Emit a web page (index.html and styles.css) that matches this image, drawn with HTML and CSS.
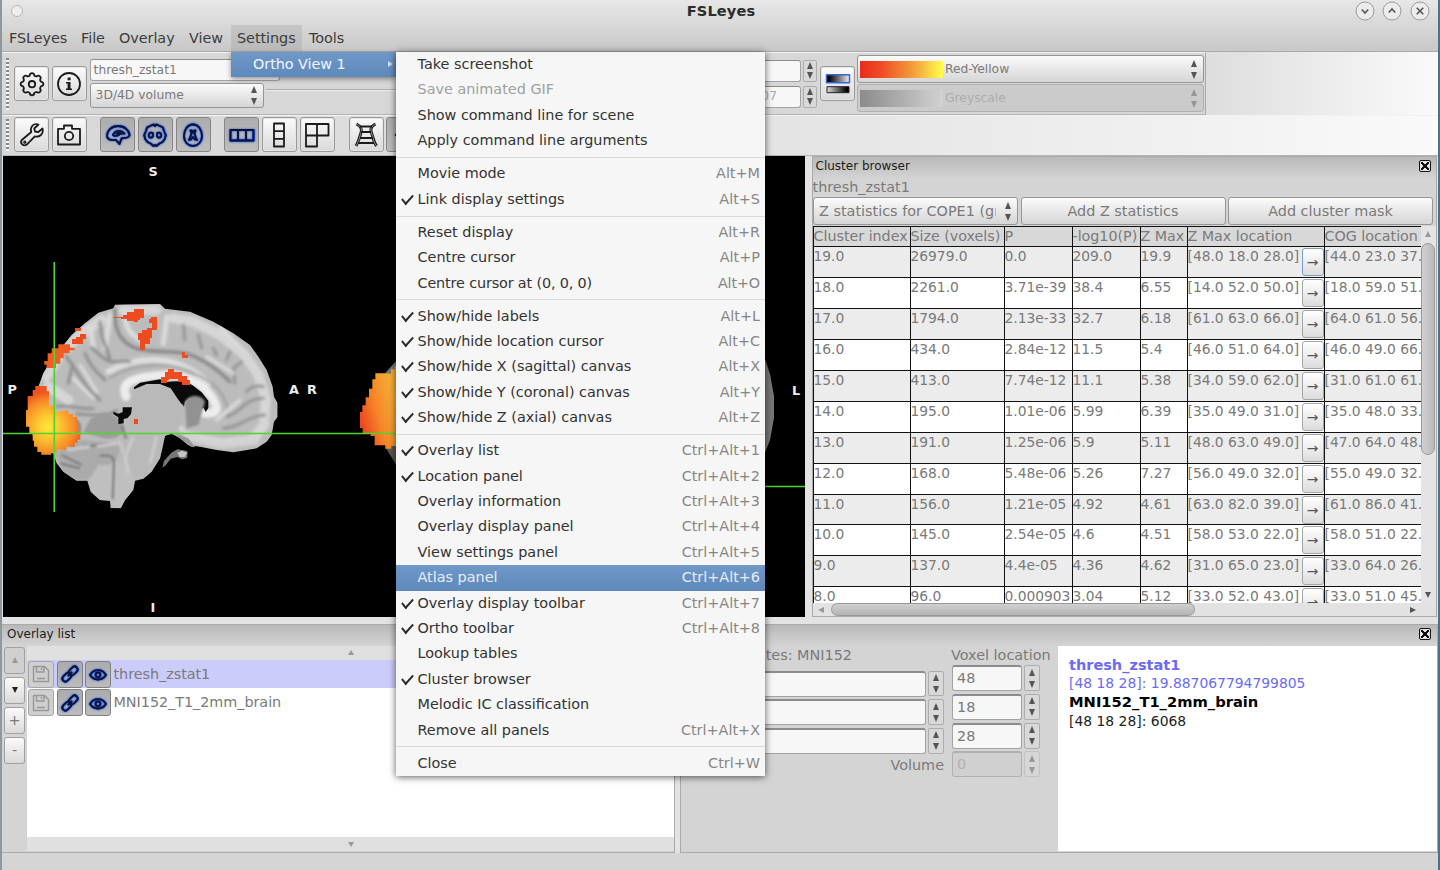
FILE: index.html
```html
<!DOCTYPE html>
<html lang="en">
<head>
<meta charset="utf-8">
<title>FSLeyes</title>
<link rel="stylesheet" href="styles.css">
</head>
<body>
<div class="window">
  <header class="chrome">
    <div class="titlebar">
      <span class="dot"></span>
      <h1 class="title">FSLeyes</h1>
      <div class="winbtns">
        <svg width="20" height="20" viewBox="0 0 20 20"><circle cx="10" cy="10" r="9"/><path d="M6.800 8.500 10 12l3.200-3.500"/></svg>
        <svg width="20" height="20" viewBox="0 0 20 20"><circle cx="10" cy="10" r="9"/><path d="M6.800 11.500 10 8l3.200 3.500"/></svg>
        <svg width="20" height="20" viewBox="0 0 20 20"><circle cx="10" cy="10" r="9"/><path d="M6.700 6.700l6.600 6.600M13.300 6.700l-6.600 6.600"/></svg>
      </div>
    </div>
    <nav class="menubar">
      <span class="mb m1">FSLeyes</span><span class="mb m2">File</span><span class="mb m3">Overlay</span><span class="mb m4">View</span><span class="mb m5 open">Settings</span><span class="mb m6">Tools</span>
    </nav>
  </header>

  <div class="toolrow">
  <div class="toolbar tb1">
    <span class="grip"></span>
    <button class="tool"><svg width="26" height="26" viewBox="0 0 26 26"><path d="M13 2.200q2 0 2.500 2.600l1.800.7q2.300-1.500 3.700-.2t0 3.600l.8 1.800q2.600.5 2.600 2.400t-2.600 2.400l-.8 1.800q1.400 2.300 0 3.600t-3.700.1l-1.800.8q-.5 2.500-2.500 2.500t-2.500-2.500l-1.800-.8q-2.300 1.300-3.700-.1t0-3.600l-.8-1.800q-2.600-.5-2.600-2.400t2.600-2.400l.8-1.800q-1.400-2.300 0-3.600t3.700.2l1.800-.7q.5-2.600 2.500-2.600z"/><circle cx="13" cy="13.200" r="3.200"/></svg></button>
    <button class="tool"><svg width="26" height="26" viewBox="0 0 26 26"><circle cx="13" cy="13" r="11"/><path class="fill" d="M11.600 6.500h3v2.800h-3zM10 11h4.500v6.500H16V19h-6v-1.500h1.600v-5H10z"/></svg></button>
    <div class="names">
      <div class="field">thresh_zstat1</div>
      <div class="combo">3D/4D volume<span class="arrows"></span></div>
    </div>
    <div class="slider"></div>
    <div class="spins">
      <div class="spinrow"><div class="field"></div><span class="spin"></span></div>
      <div class="spinrow"><div class="field">2.007</div><span class="spin"></span></div>
    </div>
    <button class="tool cm"><svg width="26" height="26" viewBox="0 0 26 26"><defs><linearGradient id="ga"><stop offset=".1" stop-color="#000"/><stop offset="1" stop-color="#eee"/></linearGradient><linearGradient id="gb"><stop offset="0" stop-color="#ddd"/><stop offset=".9" stop-color="#000"/></linearGradient></defs><rect x="1.500" y="3.700" width="23" height="8" fill="url(#ga)" stroke="#3565d8" stroke-width="1.500"/><rect x="2" y="15.700" width="22" height="6" fill="url(#gb)" stroke="#222" stroke-width="1"/></svg></button>
    <div class="maps">
      <div class="combo"><i class="ramp hot"></i>Red-Yellow<span class="arrows"></span></div>
      <div class="combo off"><i class="ramp grey"></i>Greyscale<span class="arrows"></span></div>
    </div>
  </div>
  </div>

  <div class="toolbar tb2">
    <span class="grip"></span>
    <button class="tool"><svg width="26" height="26" viewBox="0 0 26 26"><path d="M23.500 6.500l-4.500 3.700-3-.7-.8-3 4.300-4c-3-1.200-6 .2-7.200 3-.7 1.600-.5 3.200 0 4.500L2.800 18c-2.300 3 1.700 7 5 4.600l8-8.200c4.600 1.200 9.100-2.300 7.700-7.900z"/><circle cx="5.800" cy="20.200" r=".7"/></svg></button>
    <button class="tool"><svg width="26" height="26" viewBox="0 0 26 26"><path d="M2 6.800h6V3.500h8v3.300h8v15.700H2z"/><circle cx="13" cy="14" r="4.200"/></svg></button>
    <button class="tool on g1"><svg class="glow" width="26" height="26" viewBox="0 0 26 26"><path d="M2 14.500C2 8 7 4 13 4c7 0 11.500 5 11.500 9.500-1 2.500-3.500 2.500-5.500 2.500-1 0-2 0-2.500.5l-2 5.500-3.500-4C7 18.500 3 18 2 14.500z"/><path d="M8 13c2-5 8-5.500 11.500-1.500-3-.5-4.500.2-6 1.500-1.500 1-4.500 1.500-5.500 0zM11 12c1.500-1.500 3-1.500 5-1.500"/></svg></button>
    <button class="tool on"><svg class="glow" width="26" height="26" viewBox="0 0 26 26"><path d="M13 4l1.500-1.500L18 4l3 1.500.8 3 2 4.500-1 4-2.300 3-3 1.500-3 2.500-1.500-1-1.500 1-3-2.500-3-1.500-2.300-3-1-4 2-4.500.8-3L8 4l3.500-1.500z"/><path d="M10.800 11c-3-1-4.500.5-4 3s3 2 4.200.2zM15.200 11c3-1 4.500.5 4 3s-3 2-4.200.2z"/></svg></button>
    <button class="tool on"><svg class="glow" width="26" height="26" viewBox="0 0 26 26"><path d="M13 2.500c5.500 0 9 5.500 9 11.500S18 24 13 24 4 20 4 14 7.500 2.500 13 2.500z"/><path d="M10.500 8.500l1 3-1 3-1.500 3.500 2-.5 2-2.500 2 2.500 2 .5-1.500-3.500-1-3 1-3-1.500.2-1 1.800-1-1.800z"/></svg></button>
    <button class="tool on g2"><svg class="glow" width="26" height="26" viewBox="0 0 26 26"><path d="M1.500 8h23v10.500h-23zM9 8v10.500M17 8v10.500"/></svg></button>
    <button class="tool"><svg width="26" height="26" viewBox="0 0 26 26"><path d="M8 1.500h10v23H8zM8 9.200h10M8 16.800h10"/></svg></button>
    <button class="tool"><svg width="26" height="26" viewBox="0 0 26 26"><path d="M2 2h22.500v11.500H13V24.500H2zM13 2v11.500H2"/></svg></button>
    <button class="tool g3"><svg width="26" height="26" viewBox="0 0 26 26"><path d="M3.500 2c6 3 5.500 6.500 4 10.500S5.500 20 3 24M22.500 2c-6 3-5 6.500-3.500 10.500s1.500 7.500 4.500 11.500" stroke-width="3"/><path d="M3.500 2c6 3 5.500 6.500 4 10.500S5.500 20 3 24M22.500 2c-6 3-5 6.500-3.500 10.500s1.500 7.500 4.500 11.500" stroke="#aaa" stroke-width=".8"/><path d="M7 4.500h12M8 10h10M7 16h13M5 21h16"/></svg></button>
    <button class="tool on"><svg class="glow" width="26" height="26" viewBox="0 0 26 26"><path d="M4 13h20M13 2v22"/></svg></button>
  </div>

  <main class="work">
    <div class="canvas">
      <svg width="802" height="461" viewBox="3 156 802 461">
        <defs>
          <filter id="s1" x="-10%" y="-10%" width="120%" height="120%"><feGaussianBlur stdDeviation="4"/></filter>
          <filter id="s2" x="-10%" y="-10%" width="120%" height="120%"><feGaussianBlur stdDeviation="3.500"/></filter>
          <radialGradient id="occ" gradientUnits="userSpaceOnUse" cx="145" cy="410" r="105"><stop offset="0" stop-color="#ffe93c"/><stop offset=".35" stop-color="#fcc52f"/><stop offset=".75" stop-color="#f78b27"/><stop offset="1" stop-color="#ee5420"/></radialGradient>
          <linearGradient id="occ2" gradientUnits="userSpaceOnUse" x1="1080" y1="380" x2="1190" y2="350"><stop offset="0" stop-color="#ec4920"/><stop offset=".45" stop-color="#f58428"/><stop offset="1" stop-color="#f5ac35"/></linearGradient>
          <path id="bo" d="M115 290L130 250 150 215 215 135 255 100 295 68 340 55 345 44 480 42 495 56 570 65 640 95 700 130 750 165 775 200 800 240 818 290 822 320 833 340 833 380 822 395 815 435 800 455 770 475 700 487 650 480 600 470 565 466 540 445 515 431 495 437 487 475 480 505 455 545 430 566 405 572 400 600 375 630 362 655 332 655 330 632 300 630 272 605 262 572 230 572 190 545 170 520 160 490 130 485 100 440 85 400 95 330z"/>
          <clipPath id="bc"><use href="#bo"/></clipPath>
        </defs>
        <g transform="translate(0 290) scale(.33333)">
          <g clip-path="url(#bc)">
            <path fill="#bcbcbc" d="M0 0h900v700H0z"/>
            <g fill="none" stroke-linecap="round" stroke-linejoin="round" filter="url(#s1)">
              <path d="M140 260l40-65 65-65 60-40M520 85l60 10 80 40 70 55 45 65 22 70-5 80-35 45-90 10-100-20M370 60h100M145 290l60 40" stroke="#d6d6d6" stroke-width="30"/>
              <path d="M345 60c-5 60 20 105 75 118 60 12 120 0 165 22 45 20 75 45 105 75" stroke="#868686" stroke-width="10"/>
              <path d="M375 70c0 45 20 75 65 85M500 80l-10 80M330 75l-15 100M270 110l10 60" stroke="#dadada" stroke-width="16"/>
              <path d="M325 245c90-50 210-55 300 35" stroke="#dedede" stroke-width="18"/>
              <path d="M330 262c80-48 190-48 260-8 55 25 85 55 95 115" stroke="#9a9a9a" stroke-width="6"/>
              <path d="M378 320c-20-48 30-58 110-65 80-5 150 45 162 100 0 15-25 18-45 12" stroke="#ededed" stroke-width="26"/>
              <path d="M195 195c40 50 55 95 105 135M300 95c0 50 25 80 30 118-25-5-40-30-55-40M330 215c20 5 40-5 60 0M255 190c15 40 40 60 60 80M215 235l-10 45" stroke="#8e8e8e" stroke-width="9"/>
              <path d="M550 105c5 20 0 30 5 45M595 135l10 40M640 175l10 20M690 185l-10 25M725 215l-25 20 5 45M790 290c-20-5-40 0-50 15M790 325c-60 0-60 40-110 55M795 375c-50 0-75 40-125 40" stroke="#959595" stroke-width="9"/>
              <path d="M220 265l60 60M240 225l50 80M660 110l60 60M620 200l80 50M720 330l-70 60" stroke="#dedede" stroke-width="9"/>
              <path d="M170 350c40-10 60 10 110 5M230 372c40 0 80 12 120-10" stroke="#868686" stroke-width="7"/>
              <path d="M540 410c20 30 60 50 120 55l110-10" stroke="#d2d2d2" stroke-width="16"/>
            </g>
            <g filter="url(#s2)">
              <path d="M402 295c45-22 90-20 125 5 25 30 30 60 25 95l-35 35-25 15-10 60-50 60-55-5-20-60 10-80 20-40z" fill="#b9b9b9"/>
              <path d="M270 390c30-30 80-25 100 15 5 30-25 45-60 40l-60-20z" fill="#9c9c9c"/>
              <path d="M165 490l80-40 120 10-15 50-90 60-60 0z" fill="#ababab"/>
              <path d="M265 575l30-50 42 0v110h-50zM345 515l40 5 20 50-30 90h-30z" fill="#bfbfbf"/>
              <path d="M300 498c35-5 42 5 42 20l-4 110M185 495l60 30M180 520l60 15M225 390c20 10 15 30 10 45M365 405c10 20 5 30 15 40M250 470l100-10" fill="none" stroke="#7e7e7e" stroke-width="7"/>
              <path d="M290 470l70-12 10 30M200 480l70-10" fill="none" stroke="#c8c8c8" stroke-width="10"/>
              <path d="M400 440l-25 60 10 50M470 440l-20 80" fill="none" stroke="#cacaca" stroke-width="10"/>
            </g>
            <path d="M402 292l18-14 60-10 15 8 60-4 25 15 25 20 20 25 0 22-8 12-12-25-20-20-20-8-15 12-3 20-15-20-20-30-32-13-40 0-38 16zM340 365l15 6 13-5v-14l28 0-3 20-10 12-12 3 0 13-16 2v-20l-15-10z" fill="#0a0a0a"/>
            <path d="M515 282l30 0 30 25 35 25 8 15-12 10-14-22-22-12-15 12-3 15z" fill="#0a0a0a"/>
            <path d="M555 335c15-25 50-20 60 0l-20 70-35 10z" fill="#929292" filter="url(#s2)"/>
          </g>
          <path d="M487 533l5-20 22-25 18-10 30 5v20l-15 5-15-7-20 5-15 20z" fill="#777"/><path d="M532 488l15-6 15 6-8 13h-15z" fill="#c4c4c4"/><path d="M525 430l40 15 20 27-12-2-33-25z" fill="#999"/>
          <g fill="#ee4b20" shape-rendering="crispEdges">
            <path d="M338 80h30v-5h12v-10h22v-7h29v25h-10v7h-7v7h-12v-5h-20v-5h-20v-3h-24zM454 81h16v40h-14v22h-7v20h-14v16h-14v-28h-7v-22h12v-9h16v-5h14v-16h-8v-12h6zM225 114h18v9h-18zM240 131h18v16h-10v14h-32v-14h12v-7h12zM545 187h9v8h10v8h-19zM403 386h12v16h-12zM482 262h14v-15h7v-10h19v9h25v12h14v12h8v16h-22v-9h-14v-9h-27v3h-6v9h-18z"/>
          </g>
          <path d="M133 213h10v-23h12v-15h20v-12h35v10h14v8h-15v9h-18v15h-10v16h-13v13h-28v-10h-7z" fill="#f05c23"/>
          <path d="M78 360h5v-42h15v-18h8v-12h34v16h7v44h15v18h18v-4h25v10h14v9h12v22h4v28h6v18h-8v9h-9v12h-25v9h-27v8h-18v7h-30v-8h-12v-16h-10v-18h-4v-20h-10v-22h-10z" fill="url(#occ)"/>
          <path d="M1200 200l-45 50h45z" fill="#777"/><path d="M1155 470l40 65v-90z" fill="#555"/>
          <path d="M1195 228h-10v10h-12v12h-47v18h-9v28h-10v26h-10v24h-10v20h-7v48h8v16h24v8h12v28h32v10h18v-8h20z" fill="url(#occ2)"/>
        </g>
        <path d="M764 356l6 18 4 22v22l-4 22-6 15z" fill="#777"/>
        <path d="M54.300 262v250M3 433.500h400M700 486.500h105" fill="none" stroke="#4fd52f" stroke-width="1.700"/>
        <g class="lbl"><text x="148.500" y="176">S</text><text x="7.500" y="394">P</text><text x="289" y="394">A</text><text x="307" y="394">R</text><text x="792" y="395">L</text><text x="150.500" y="612">I</text></g>
      </svg>
    </div>

    <section class="cluster">
      <div class="caption">Cluster browser<span class="close"></span></div>
      <div class="cname">thresh_zstat1</div>
      <div class="cbtns">
        <div class="combo big"><span class="clip">Z statistics for COPE1 (group mean)</span><span class="arrows"></span></div>
        <button class="btn">Add Z statistics</button><button class="btn">Add cluster mask</button>
      </div>
      <div class="gridwrap">
        <div class="grid">
          <div class="row head"><b>Cluster index</b><b>Size (voxels)</b><b>P</b><b>-log10(P)</b><b>Z Max</b><b>Z Max location</b><b>COG location</b></div>
          <div class="row"><b>19.0</b><b>26979.0</b><b>0.0</b><b>209.0</b><b>19.9</b><b>[48.0 18.0 28.0]<i class="go focus">→</i></b><b>[44.0 23.0 37.0]</b></div>
          <div class="row"><b>18.0</b><b>2261.0</b><b>3.71e-39</b><b>38.4</b><b>6.55</b><b>[14.0 52.0 50.0]<i class="go">→</i></b><b>[18.0 59.0 51.0]</b></div>
          <div class="row"><b>17.0</b><b>1794.0</b><b>2.13e-33</b><b>32.7</b><b>6.18</b><b>[61.0 63.0 66.0]<i class="go">→</i></b><b>[64.0 61.0 56.0]</b></div>
          <div class="row"><b>16.0</b><b>434.0</b><b>2.84e-12</b><b>11.5</b><b>5.4</b><b>[46.0 51.0 64.0]<i class="go">→</i></b><b>[46.0 49.0 66.0]</b></div>
          <div class="row"><b>15.0</b><b>413.0</b><b>7.74e-12</b><b>11.1</b><b>5.38</b><b>[34.0 59.0 62.0]<i class="go">→</i></b><b>[31.0 61.0 61.0]</b></div>
          <div class="row"><b>14.0</b><b>195.0</b><b>1.01e-06</b><b>5.99</b><b>6.39</b><b>[35.0 49.0 31.0]<i class="go">→</i></b><b>[35.0 48.0 33.0]</b></div>
          <div class="row"><b>13.0</b><b>191.0</b><b>1.25e-06</b><b>5.9</b><b>5.11</b><b>[48.0 63.0 49.0]<i class="go">→</i></b><b>[47.0 64.0 48.0]</b></div>
          <div class="row"><b>12.0</b><b>168.0</b><b>5.48e-06</b><b>5.26</b><b>7.27</b><b>[56.0 49.0 32.0]<i class="go">→</i></b><b>[55.0 49.0 32.0]</b></div>
          <div class="row"><b>11.0</b><b>156.0</b><b>1.21e-05</b><b>4.92</b><b>4.61</b><b>[63.0 82.0 39.0]<i class="go">→</i></b><b>[61.0 86.0 41.0]</b></div>
          <div class="row"><b>10.0</b><b>145.0</b><b>2.54e-05</b><b>4.6</b><b>4.51</b><b>[58.0 53.0 22.0]<i class="go">→</i></b><b>[58.0 51.0 22.0]</b></div>
          <div class="row"><b>9.0</b><b>137.0</b><b>4.4e-05</b><b>4.36</b><b>4.62</b><b>[31.0 65.0 23.0]<i class="go">→</i></b><b>[33.0 64.0 26.0]</b></div>
          <div class="row"><b>8.0</b><b>96.0</b><b>0.000903</b><b>3.04</b><b>5.12</b><b>[33.0 52.0 43.0]<i class="go">→</i></b><b>[33.0 51.0 45.0]</b></div>
        </div>
        <div class="vbar"><i class="tri up dim"></i><span class="vthumb"></span><i class="tri down"></i></div>
      </div>
      <div class="hbar"><i class="tri left dim"></i><span class="hthumb"></span><i class="tri right"></i></div>
    </section>
  </main>

  <div class="bottom">
    <section class="overlays">
      <div class="caption">Overlay list</div>
      <div class="obody">
        <div class="side"><button class="sb off"><i class="tri up"></i></button><button class="sb"><i class="tri down dark"></i></button><button class="sb">+</button><button class="sb">-</button></div>
        <div class="list">
          <div class="strip"><i class="tri up dim"></i></div>
          <div class="items">
            <div class="item sel">
              <span class="ib off"><svg width="18" height="18" viewBox="0 0 18 18"><path d="M1.500 1.500h11l4 4v11h-15zM4.500 1.500V7h7.500V1.500M9.500 3v2M5 13.500h8"/></svg></span>
              <span class="ib"><svg class="glow" width="18" height="18" viewBox="0 0 18 18"><g transform="rotate(-45 9 9)"><rect x="-.5" y="6" width="10" height="6" rx="3"/><rect x="8.500" y="6" width="10" height="6" rx="3"/><path d="M6 9h6"/></g></svg></span>
              <span class="ib"><svg class="glow" width="18" height="18" viewBox="0 0 18 18"><path d="M1 10c4-6.500 12-6.500 16 0-4 6-12 6-16 0z"/><circle cx="9" cy="9.700" r="2.400"/></svg></span>thresh_zstat1</div>
            <div class="item">
              <span class="ib off"><svg width="18" height="18" viewBox="0 0 18 18"><path d="M1.500 1.500h11l4 4v11h-15zM4.500 1.500V7h7.500V1.500M9.500 3v2M5 13.500h8"/></svg></span>
              <span class="ib"><svg class="glow" width="18" height="18" viewBox="0 0 18 18"><g transform="rotate(-45 9 9)"><rect x="-.5" y="6" width="10" height="6" rx="3"/><rect x="8.500" y="6" width="10" height="6" rx="3"/><path d="M6 9h6"/></g></svg></span>
              <span class="ib"><svg class="glow" width="18" height="18" viewBox="0 0 18 18"><path d="M1 10c4-6.500 12-6.500 16 0-4 6-12 6-16 0z"/><circle cx="9" cy="9.700" r="2.400"/></svg></span>MNI152_T1_2mm_brain</div>
          </div>
          <div class="strip"><i class="tri down dim"></i></div>
        </div>
      </div>
    </section>
    <section class="location">
      <div class="caption"><span class="close"></span></div>
      <div class="lbody">
        <div class="world">
          <div class="wtitle">Coordinates: MNI152</div>
          <div class="spinrow"><div class="field"></div><span class="spin"></span></div>
          <div class="spinrow"><div class="field"></div><span class="spin"></span></div>
          <div class="spinrow"><div class="field"></div><span class="spin"></span></div>
          <div class="vol">Volume</div>
        </div>
        <div class="voxel">
          <div class="vtitle">Voxel location</div>
          <div class="spinrow"><div class="field">48</div><span class="spin"></span></div>
          <div class="spinrow"><div class="field">18</div><span class="spin"></span></div>
          <div class="spinrow"><div class="field">28</div><span class="spin"></span></div>
          <div class="spinrow off"><div class="field">0</div><span class="spin"></span></div>
        </div>
        <div class="info"><p class="blue bold b1">thresh_zstat1</p><p class="blue">[48 18 28]: 19.887067794799805</p><p class="bold">MNI152_T1_2mm_brain</p><p>[48 18 28]: 6068</p></div>
      </div>
    </section>
  </div>
  <footer class="status"></footer>

  <div class="submenu">Ortho View 1<i class="tri right"></i></div>
  <ul class="menu">
    <li>Take screenshot</li><li class="dis">Save animated GIF</li><li>Show command line for scene</li><li>Apply command line arguments</li>
    <li class="sep"></li>
    <li>Movie mode<kbd>Alt+M</kbd></li><li class="chk">Link display settings<kbd>Alt+S</kbd></li>
    <li class="sep"></li>
    <li>Reset display<kbd>Alt+R</kbd></li><li>Centre cursor<kbd>Alt+P</kbd></li><li class="tight">Centre cursor at (0, 0, 0)<kbd>Alt+O</kbd></li>
    <li class="sep"></li>
    <li class="chk">Show/hide labels<kbd>Alt+L</kbd></li><li class="chk">Show/hide location cursor<kbd>Alt+C</kbd></li><li class="chk">Show/hide X (sagittal) canvas<kbd>Alt+X</kbd></li><li class="chk">Show/hide Y (coronal) canvas<kbd>Alt+Y</kbd></li><li class="chk">Show/hide Z (axial) canvas<kbd>Alt+Z</kbd></li>
    <li class="sep"></li>
    <li class="chk">Overlay list<kbd>Ctrl+Alt+1</kbd></li><li class="chk">Location panel<kbd>Ctrl+Alt+2</kbd></li><li>Overlay information<kbd>Ctrl+Alt+3</kbd></li><li>Overlay display panel<kbd>Ctrl+Alt+4</kbd></li><li>View settings panel<kbd>Ctrl+Alt+5</kbd></li><li class="hov">Atlas panel<kbd>Ctrl+Alt+6</kbd></li><li class="chk">Overlay display toolbar<kbd>Ctrl+Alt+7</kbd></li><li class="chk">Ortho toolbar<kbd>Ctrl+Alt+8</kbd></li><li>Lookup tables</li><li class="chk">Cluster browser</li><li>Melodic IC classification</li><li>Remove all panels<kbd>Ctrl+Alt+X</kbd></li>
    <li class="sep"></li>
    <li>Close<kbd>Ctrl+W</kbd></li>
  </ul>
</div>
</body>
</html>
```
FILE: styles.css
```css
* { box-sizing: border-box; }
body { margin: 0; font: 14.4px/18px "DejaVu Sans", sans-serif; color: #7a7a7a; }
button { font: inherit; color: inherit; padding: 0; }
.window { position: relative; width: 1440px; height: 870px; overflow: hidden; display: flex; flex-direction: column; background: #e3e3e3; border-left: 2px solid #8f979f; border-right: 2px solid #4d7186; }

.chrome { height: 52px; flex: none; background: linear-gradient(#e7e7e7, #c8c8c8); border-bottom: 1px solid #a9a9a9; }
.titlebar { height: 25px; display: flex; align-items: flex-start; justify-content: space-between; padding: 1px 8px 0 9px; }
.dot { width: 12px; height: 12px; margin-top: 4px; border-radius: 50%; border: 1px solid #b5b5b5; background: #eee; }
.title { margin: 1px 0 0 64px; font-size: 14.6px; line-height: 18px; font-weight: bold; color: #2c2c2c; letter-spacing: .1px; }
.winbtns { display: flex; gap: 7.500px; }
.winbtns svg { fill: #ececec; stroke: #9a9a9a; stroke-width: 1; }
.winbtns path { fill: none; stroke: #555; stroke-width: 1.6; }
.menubar { display: flex; height: 26px; color: #3c3c3c; padding-left: 7px; letter-spacing: -.05px; }
.mb { line-height: 27px; white-space: nowrap; }
.m1 { width: 72px; } .m2 { width: 38px; } .m3 { width: 70px; } .m4 { width: 42px; }
.m5 { width: 71px; padding-left: 6px; } .m6 { padding-left: 7px; }
.open { background: linear-gradient(#c6c6c6, #b9b9b9); }

.toolrow { flex: none; background: linear-gradient(90deg, #dcdcdc 83%, #fafafa); }
.toolbar { display: flex; align-items: center; flex: none; background: #d7d7d7; border-top: 1px solid #f2f2f2; border-bottom: 1px solid #b4b4b4; }
.grip { width: 3px; height: 52px; margin: 0 5px 0 4px; background: repeating-linear-gradient(#888 0 2px, #f4f4f4 2px 4px); flex: none; }
.tb1 { height: 63px; width: 1204px; border-right: 1px solid #a9a9a9; }
.tb2 { height: 41px; padding-bottom: 2px; background: linear-gradient(90deg, #d7d7d7, #e2e2e2 50%, #f2f2f2 85%, #fafafa); }
.tb2 .grip { height: 32px; }
.tool { width: 35px; height: 35px; margin-right: 2.800px; flex: none; display: flex; align-items: center; justify-content: center; border: 1px solid #9a9a9a; border-radius: 3px; background: linear-gradient(#fbfbfb, #d9d9d9); box-shadow: 0 0 0 1px #e6e6e6 inset; }
.tool.on { background: linear-gradient(#adadad, #bebebe); border-color: #858585; box-shadow: none; }
.g1, .g2 { margin-left: 10.600px; } .g3 { margin-left: 11px; }
.tool svg, .ib svg { fill: none; stroke: #1b1b1b; stroke-width: 1.800; stroke-linejoin: round; overflow: visible; }
.tool svg.glow, .ib svg.glow { stroke: #0b1330; }
.tool svg .fill { fill: #1b1b1b; stroke: none; }
.glow { filter: drop-shadow(0 0 .6px #1c50e0) drop-shadow(0 0 .6px #1c50e0) drop-shadow(0 0 .8px #2a5ce6); }
.field { height: 22px; background: #f7f7f7; border: 1px solid #a3a3a3; border-top: 2px solid #8c8c8c; border-radius: 3px; padding-left: 4px; }
.names { width: 174px; display: flex; flex-direction: column; gap: 2px; font-size: 12.300px; }
.names .field { width: 190px; height: 22px; line-height: 20px; border-top-width: 1px; padding-left: 3px; }
.combo { position: relative; display: flex; align-items: center; border: 1px solid #969696; border-radius: 3px; background: linear-gradient(#fbfbfb, #d5d5d5); }
.names .combo { height: 25px; padding-left: 5px; padding-bottom: 1px; }
.arrows, .spin { display: flex; flex-direction: column; align-items: center; justify-content: center; gap: 5px; }
.arrows { position: absolute; right: 6px; top: 0; bottom: 0; }
.arrows::before, .spin::before { content: ""; border: 3.500px solid transparent; border-top: 0; border-bottom: 7px solid #555; }
.arrows::after, .spin::after { content: ""; border: 3.500px solid transparent; border-bottom: 0; border-top: 7px solid #555; }
.slider { flex: 1; height: 2px; background: #ababab; border-bottom: 1px solid #eee; margin: 12px 0 0 2px; }
.spins { width: 120px; display: flex; flex-direction: column; gap: 4px; font-size: 12.300px; color: #aaa; }
.spinrow { display: flex; gap: 2px; }
.spinrow .field { flex: 1; }
.spins .field { text-align: right; padding-right: 23px; line-height: 19px; border-top-width: 1px; }
.spin { width: 16px; border: 1px solid #adadad; border-radius: 2px; background: #d9d9d9; gap: 5px; }
.spins .spin { width: 14px; gap: 3px; }
.cm { margin: 0 2px 0 3px; }
.maps { width: 347px; display: flex; flex-direction: column; gap: 1px; font-size: 12.300px; margin-right: 1px; }
.maps .combo { height: 28px; padding-left: 2px; }
.ramp { width: 83px; height: 17px; margin-right: 2px; }
.hot { background: linear-gradient(90deg, #ea2a20, #ee4a26 25%, #f2a03c 65%, #ffff4a); }
.grey { background: linear-gradient(90deg, #8b8b8b, #d2d2d2); }
.combo.off { background: #cbcbcb; color: #acacac; border-color: #b0b0b0; }
.off .arrows, .off .spin { opacity: .45; }

.work { display: flex; height: 461px; flex: none; padding-left: 1px; }
.canvas { width: 802px; background: #000; flex: none; }
.canvas svg { display: block; }
.lbl { fill: #eee; font: bold 12.800px "DejaVu Sans", sans-serif; }
.cluster { width: 625px; margin-left: 6.500px; background: #d4d4d4; border: 1px solid #aaa; display: flex; flex-direction: column; min-width: 0; flex: none; }
.caption { height: 22px; flex: none; background: linear-gradient(#b9b9b9, #d4d4d4); color: #1c1c1c; font-size: 12px; line-height: 19px; padding: 0 5px 0 4px; display: flex; justify-content: space-between; }
.cluster .caption { padding-left: 3px; }
.location .caption { padding-right: 6px; }
.close { width: 12px; height: 12px; margin: 3px 0 0 auto; border: 1.500px solid #111; border-radius: 2px; background: linear-gradient(45deg, transparent 40%, #111 40% 60%, transparent 60%) center / 8px 8px no-repeat, linear-gradient(-45deg, #e4e4e4 40%, #111 40% 60%, #e4e4e4 60%) center / 8px 8px no-repeat, #e4e4e4; }
.cname { height: 18px; line-height: 16px; flex: none; }
.cbtns { display: flex; gap: 2.500px; height: 28px; flex: none; padding: 0 1px 0 .5px; }
.cbtns > * { flex: 0 0 205px; }
.btn { border: 1px solid #969696; border-radius: 3px; background: linear-gradient(#fbfbfb, #d5d5d5); }
.combo.big { padding-left: 5px; }
.clip { overflow: hidden; white-space: nowrap; width: 177px; }
.gridwrap { display: flex; height: 377px; margin-top: 1px; flex: none; overflow: hidden; }
.grid { width: 608px; overflow: hidden; border-top: 1px solid #111; }
.row { display: grid; grid-template-columns: 97px 94px 68px 68px 47px 137px 98px; height: 30.950px; background: #fff; border-bottom: 1px solid #111; font-size: 13.850px; }
.row:nth-child(even) { background: #ececec; }
.row.head { height: 20px; background: #d8d8d8; font-size: 14.300px; }
.row b { font-weight: normal; border-left: 1px solid #111; padding: 0; white-space: nowrap; overflow: hidden; display: flex; letter-spacing: -.02px; }
.row.head b { overflow: visible; }
.row.head b:last-child { overflow: hidden; }
.go { font-style: normal; width: 22px; height: 28px; margin: 1px 0 0 auto; border: 1px solid #a5a5a5; border-radius: 3px; background: linear-gradient(#fff, #dcdcdc); text-align: center; line-height: 26px; color: #555; flex: none; }
.go.focus { border: 1.500px solid #7a9cc8; }
.vbar { width: 15px; background: #e4e4e4; display: flex; flex-direction: column; align-items: center; padding: 5px 0; }
.vthumb { width: 14px; height: 212px; margin: 6px 0 auto; border: 1px solid #989898; border-radius: 7px; background: linear-gradient(90deg, #d0d0d0, #bababa); }
.hbar { flex: 1; background: #e2e2e2; display: flex; align-items: center; padding: 0 20px 0 5px; }
.hthumb { width: 364px; height: 13px; margin: 0 auto 0 7px; border: 1px solid #989898; border-radius: 7px; background: linear-gradient(#d0d0d0, #b4b4b4); }
.tri { display: block; border: 3.500px solid transparent; flex: none; }
.tri.up { border-top: 0; border-bottom: 6px solid #999; }
.tri.down { border-bottom: 0; border-top: 6px solid #555; }
.tri.right { border-right: 0; border-left: 6px solid #555; }
.tri.left { border-left: 0; border-right: 6px solid #999; }
.strip .tri.down { border-top-color: #999; }
.tri.dark { border-top-color: #222; }

.bottom { display: flex; height: 229px; margin-top: 6.500px; flex: none; }
.overlays { width: 673px; border: 1px solid #aaa; border-left: 0; background: #d4d4d4; }
.overlays .caption { padding-left: 5px; }
.bottom .caption { height: 21px; }
.obody { display: flex; height: 205.500px; }
.side { width: 25px; padding: 1px 0 0 2px; display: flex; flex-direction: column; gap: 3px; }
.sb { width: 21px; height: 27px; display: flex; align-items: center; justify-content: center; border: 1px solid #a0a0a0; border-radius: 3px; background: linear-gradient(#fafafa, #dadada); }
.sb.off { background: #d0d0d0; }
.list { flex: 1; display: flex; flex-direction: column; background: #fff; }
.strip { height: 14px; background: #e0e0e0; display: flex; align-items: center; justify-content: center; flex: none; }
.strip .tri { border-left-width: 3px; border-right-width: 3px; }
.strip .tri.up { border-bottom-width: 5px; } .strip .tri.down { border-top-width: 5px; }
.items { flex: 1; }
.item { display: flex; height: 28.700px; padding: 1px 0 0 1px; line-height: 26px; gap: 2.500px; letter-spacing: -.05px; }
.item.sel { background: #ccccfb; }
.ib { width: 26px; height: 27px; border: 1px solid #808080; border-radius: 3px; background: linear-gradient(#ababab, #bcbcbc); display: flex; align-items: center; justify-content: center; }
.ib.off { background: #cfcfcf; border-color: #a5a5a5; }
.ib.off svg { stroke: #979797; stroke-width: 1.400; }

.location { width: 758px; margin-left: 5px; border: 1px solid #aaa; background: #d4d4d4; }
.lbody { display: flex; height: 205.500px; }
.world { width: 263px; padding-left: 10px; display: flex; flex-direction: column; gap: 3px; }
.wtitle { text-align: right; padding-right: 92px; height: 22px; line-height: 18px; }
.lbody .field { height: 26px; line-height: 22px; }
.lbody .spinrow { height: 25.800px; }
.vol { text-align: right; line-height: 17px; }
.voxel { width: 107px; margin-left: 7px; display: flex; flex-direction: column; gap: 2.900px; }
.vtitle { height: 17px; line-height: 18px; white-space: nowrap; }
.voxel .spinrow { width: 88px; margin-left: 1px; }
.spinrow.off .field { background: #d0d0d0; color: #b0b0b0; border-color: #b0b0b0; }
.info { flex: 1; background: #fff; padding: 10px 0 0 11px; color: #222; line-height: 18.900px; font-size: 13.900px; }
.info p { margin: 0; }
.info .bold { font-weight: bold; color: #000; font-size: 14.700px; }
.info .blue { color: #6a6af6; }
.info .b1 { font-size: 14.500px; }
.status { flex: 1; background: #d5d5d5; }

.submenu { position: absolute; left: 229px; top: 52px; width: 165px; height: 25px; background: linear-gradient(#7099c9, #5f88bb); color: #f2f5fa; padding-left: 22px; line-height: 25px; letter-spacing: -.05px; box-shadow: 0 2px 5px rgba(0,0,0,.4); }
.submenu .tri { position: absolute; right: 3px; top: 9px; border-left: 5px solid #cfdcee; }
.menu { position: absolute; left: 394px; top: 52px; width: 369px; height: 724px; margin: 0; padding: 0; list-style: none; background: #f6f6f6; color: #333; box-shadow: 0 1px 7px rgba(0,0,0,.65); }
.menu li { position: relative; height: 25.400px; line-height: 25.400px; padding: 0 5px 0 21.500px; display: flex; justify-content: space-between; white-space: nowrap; }
.menu kbd { font: inherit; color: #868686; }
.menu .sep { height: 7.700px; padding: 0; }
.menu .sep::before { content: ""; width: 100%; height: 1px; margin-top: 3.500px; background: #dadada; }
.menu .tight { letter-spacing: -.15px; }
.menu .dis { color: #a0a0a0; }
.menu .hov { background: linear-gradient(#7099c9, #5f88bb); color: #e6edf6; }
.menu .hov kbd { color: #e6edf6; }
.chk::before { content: ""; position: absolute; left: 8px; top: 5px; width: 5px; height: 10px; border: solid #2b2b2b; border-width: 0 2px 2px 0; transform: rotate(42deg) skewY(8deg); }
```
